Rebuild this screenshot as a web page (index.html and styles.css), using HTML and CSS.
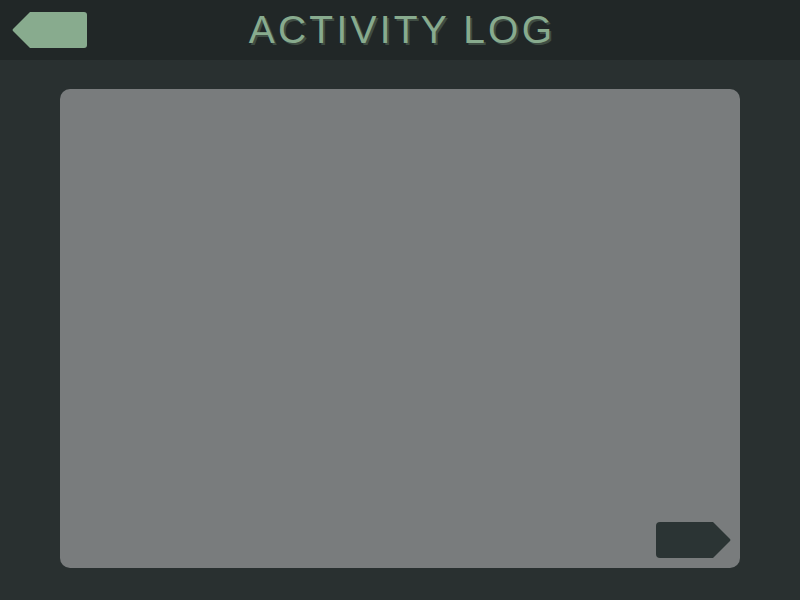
FILE: index.html
```html
<!DOCTYPE html>
<html>
<head>
<meta charset="utf-8">
<link rel="stylesheet" href="styles.css">
</head>
<body>
<div class="app">
  <header class="header">
    <button class="back" aria-label="Back">
      <svg width="75" height="36" viewBox="0 0 75 36"><path d="M18 0 H72 Q75 0 75 3 V33 Q75 36 72 36 H18 L1 19 Q0 18 1 17 Z" fill="#88ab8e"/></svg>
    </button>
    <h1 class="title">ACTIVITY LOG</h1>
  </header>
  <main class="main">
    <section class="panel">
      <button class="next" aria-label="Next">
        <svg width="75" height="36" viewBox="0 0 75 36"><path d="M4 0 H57 L74 17 Q75 18 74 19 L57 36 H4 Q0 36 0 32 V4 Q0 0 4 0 Z" fill="#2b3434"/></svg>
      </button>
    </section>
  </main>
</div>
</body>
</html>
```
FILE: styles.css
```css
* { box-sizing: border-box; }
html, body { margin: 0; padding: 0; }
body { width: 800px; height: 600px; background: #293030; font-family: "Liberation Sans", Arial, sans-serif; overflow: hidden; }
.app { display: flex; flex-direction: column; height: 600px; }
.header { height: 60px; background: #212727; display: flex; align-items: center; justify-content: center; position: relative; }
.back { position: absolute; left: 12px; top: 12px; padding: 0; border: 0; background: none; width: 75px; height: 36px; display: block; }
.back svg, .next svg { display: block; }
.title { margin: 0; font-size: 39px; font-weight: 400; letter-spacing: 3.2px; color: #88ab8e; text-shadow: 2px 2px 0 #3f4d44; line-height: 60px; padding-left: 4px; }
.main { flex: 1; padding: 29px 60px 32px; display: flex; }
.panel { flex: 1; background: #797c7d; border-radius: 10px; display: flex; align-items: flex-end; justify-content: flex-end; padding: 0 9px 10px 0; }
.next { padding: 0; border: 0; background: none; width: 75px; height: 36px; }
```
